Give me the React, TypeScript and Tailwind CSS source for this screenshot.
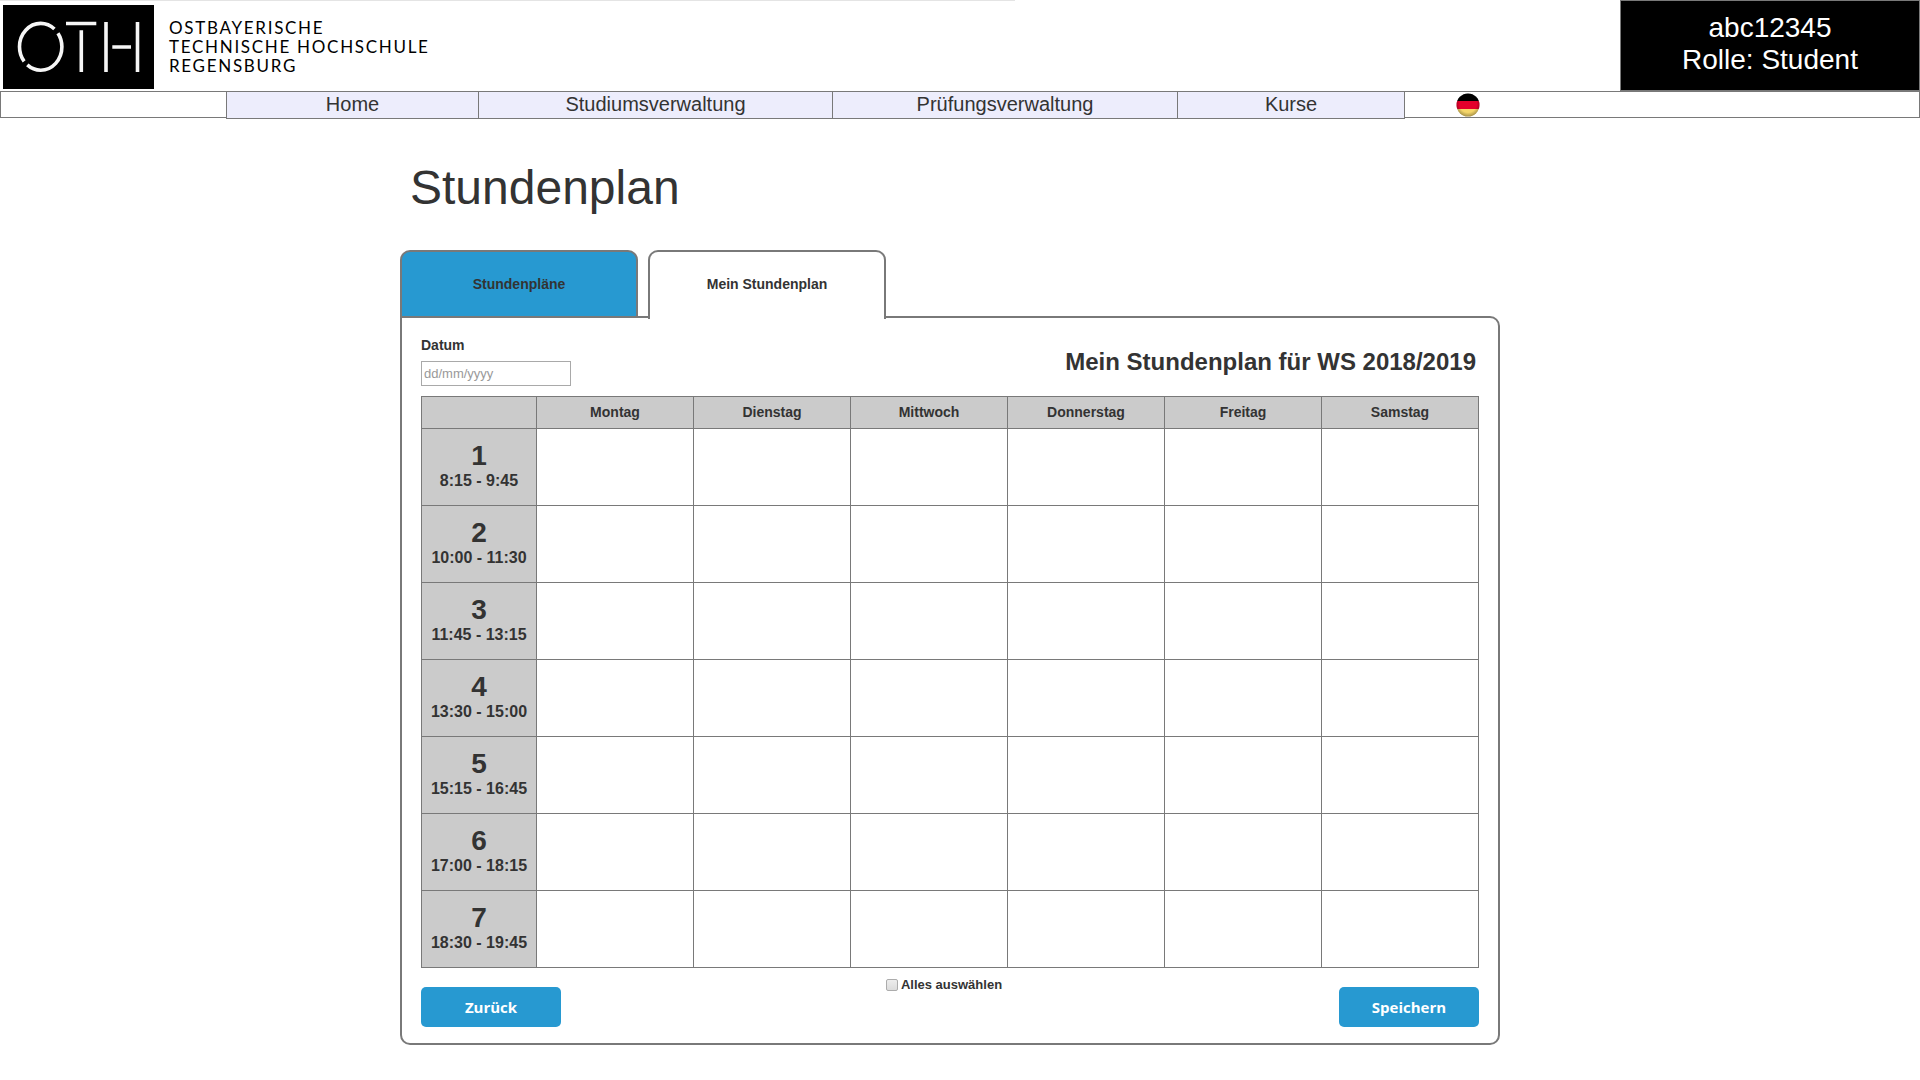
const days = ["Montag", "Dienstag", "Mittwoch", "Donnerstag", "Freitag", "Samstag"];

const slots = [
  "8:15 - 9:45",
  "10:00 - 11:30",
  "11:45 - 13:15",
  "13:30 - 15:00",
  "15:15 - 16:45",
  "17:00 - 18:15",
  "18:30 - 19:45",
];

function Logo() {
  return (
    <svg width="151" height="84" viewBox="0 0 151 84" role="img" aria-label="OTH" className="shrink-0">
      <rect width="151" height="84" fill="#000" />
      <g fill="none" stroke="#f6f6f6" strokeWidth="3.6">
        <ellipse cx="37.7" cy="41.8" rx="21.2" ry="23.4" pathLength="360" strokeDasharray="128 12 169 14 37 0" />
        <path d="M63 18.5H93.300M78.300 25.300V67M103 17V67M134.500 17V67M109.300 42H128" />
      </g>
    </svg>
  );
}

function GermanFlag() {
  return (
    <svg width="24" height="24" viewBox="0 0 24 24" aria-hidden="true">
      <defs>
        <clipPath id="flag-disc">
          <circle cx="12" cy="12" r="11.500" />
        </clipPath>
        <radialGradient id="flag-shade" cx="0.5" cy="0.45" r="0.55">
          <stop offset="0.65" stopColor="#000" stopOpacity="0" />
          <stop offset="1" stopColor="#000" stopOpacity="0.35" />
        </radialGradient>
      </defs>
      <g clipPath="url(#flag-disc)">
        <rect width="24" height="8" fill="#000" />
        <rect y="8" width="24" height="8" fill="#e4002b" />
        <rect y="16" width="24" height="8" fill="#f5d66a" />
        <rect width="24" height="24" fill="url(#flag-shade)" />
      </g>
    </svg>
  );
}

function Header() {
  return (
    <header className="flex h-[91px] justify-between">
      <div className="flex w-[1015px] gap-[15px] border-t border-[#e4e4e4] pt-1 pl-[3px]">
        <Logo />
        <p className="pt-[13px] font-['Lato'] text-[17px] leading-[19px] tracking-widest text-black">
          OSTBAYERISCHE
          <br />
          TECHNISCHE HOCHSCHULE
          <br />
          REGENSBURG
        </p>
      </div>
      <div className="w-[300px] border border-[#797979] bg-black pt-[11px] text-center text-[28px] leading-8 text-white">
        <p>abc12345</p>
        <p>Rolle: Student</p>
      </div>
    </header>
  );
}

const navItem = "-mt-px -mb-[2px] border border-r-0 border-[#797979] bg-[#ededfc] text-center text-xl leading-6";

function Navigation() {
  return (
    <nav className="grid h-[27px] grid-cols-[225fr_252fr_354fr_345fr_227fr_515fr] border border-[#797979]">
      <span />
      <a href="#home" className={navItem}>Home</a>
      <a href="#studium" className={navItem}>Studiumsverwaltung</a>
      <a href="#pruefung" className={navItem}>Prüfungsverwaltung</a>
      <a href="#kurse" className={navItem}>Kurse</a>
      <div className="-mb-[2px] border-l border-[#797979] pl-[51px]">
        <button type="button" aria-label="Sprache: Deutsch" className="block pt-px">
          <GermanFlag />
        </button>
      </div>
    </nav>
  );
}

function Tabs() {
  return (
    <div role="tablist" className="relative flex gap-[10px] text-sm font-bold">
      <button
        type="button"
        role="tab"
        aria-selected="false"
        className="h-[66px] w-[238px] rounded-t-[10px] border-2 border-b-0 border-[#797979] bg-[#2799d1]"
      >
        Stundenpläne
      </button>
      <button
        type="button"
        role="tab"
        aria-selected="true"
        className="-mb-[3px] h-[69px] w-[238px] rounded-t-[10px] border-2 border-b-0 border-[#797979] bg-white pb-[3px]"
      >
        Mein Stundenplan
      </button>
    </div>
  );
}

function Timetable() {
  return (
    <table className="w-full table-fixed border-collapse text-sm">
      <colgroup>
        <col className="w-[115px]" />
        {days.map((day) => (
          <col key={day} />
        ))}
      </colgroup>
      <thead>
        <tr className="h-8 bg-[#cbcbcb]">
          <td className="border border-[#797979]" />
          {days.map((day) => (
            <th key={day} scope="col" className="border border-[#797979] p-0 pb-[2px]">
              {day}
            </th>
          ))}
        </tr>
      </thead>
      <tbody>
        {slots.map((time, index) => (
          <tr key={time} className="h-[77px]">
            <th scope="row" className="border border-[#797979] bg-[#cbcbcb] p-0">
              <span className="block pt-px text-[28px] leading-[26px]">{index + 1}</span>
              <span className="block text-base leading-6">{time}</span>
            </th>
            {days.map((day) => (
              <td key={day} className="border border-[#797979]" />
            ))}
          </tr>
        ))}
      </tbody>
    </table>
  );
}

const actionButton = "h-10 w-[140px] rounded-[5px] bg-[#2799d1] font-['Open_Sans'] text-[15px] font-bold text-white";

export default function App() {
  return (
    <div className="min-h-screen bg-white font-['Liberation_Sans',sans-serif] text-[#333]">
      <Header />
      <Navigation />
      <main className="pr-5">
        <div className="mx-auto max-w-[1100px]">
          <h1 className="pt-10 pl-[10px] text-5xl leading-[60px]">Stundenplan</h1>
          <div className="pt-8">
            <Tabs />
          </div>
          <section className="rounded-[10px] rounded-tl-none border-2 border-[#797979] px-[19px] pt-[17px] pb-4">
            <div className="flex items-start justify-between">
              <div>
                <label htmlFor="datum" className="block text-sm leading-5 font-bold">
                  Datum
                </label>
                <input
                  id="datum"
                  type="text"
                  placeholder="dd/mm/yyyy"
                  className="mt-[6px] block h-[25px] w-[150px] border border-[#a9a9a9] px-[2px] text-[13px] placeholder:text-[#999]"
                />
              </div>
              <h2 className="pt-[13px] pr-[3px] text-2xl leading-7 font-bold">Mein Stundenplan für WS 2018/2019</h2>
            </div>
            <div className="pt-[10px]">
              <Timetable />
            </div>
            <div className="flex items-end justify-between pt-[9px]">
              <button type="button" className={actionButton}>
                Zurück
              </button>
              <label className="mr-3 mb-[34px] flex items-center gap-[3px] text-[13px] leading-4 font-bold">
                <input
                  type="checkbox"
                  className="size-3 appearance-none rounded-[2px] border border-[#acacac] bg-linear-to-b from-[#ededed] to-[#dcdcdc] checked:bg-[#2799d1]"
                />
                Alles auswählen
              </label>
              <button type="button" className={actionButton}>
                Speichern
              </button>
            </div>
          </section>
        </div>
      </main>
    </div>
  );
}
